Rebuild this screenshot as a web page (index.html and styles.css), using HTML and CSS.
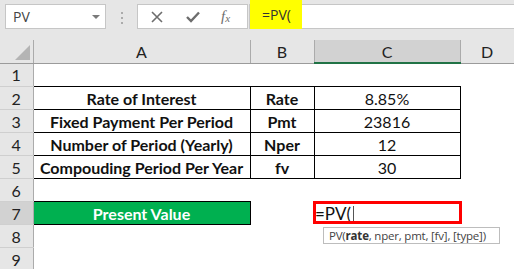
FILE: index.html
```html
<!DOCTYPE html>
<html lang="en">
<head>
  <meta charset="UTF-8">
  <title>PV formula</title>
  <link rel="stylesheet" href="styles.css">
</head>
<body>

  <div class="toolbar">
    <div class="namebox">
      <span>PV</span>
      <span class="drop"></span>
    </div>
    <div class="grip"><i></i><i></i><i></i></div>
    <div class="buttons">
      <svg class="ico" width="12" height="12" viewBox="0 0 12 12">
        <path d="M1 1 L11 11 M11 1 L1 11" stroke="#6d6d6d" stroke-width="1.6" fill="none"/>
      </svg>
      <svg class="ico" width="14" height="12" viewBox="0 0 14 12">
        <path d="M1 6 L5 10 L13 1.5" stroke="#6d6d6d" stroke-width="2.4" fill="none"/>
      </svg>
      <span class="fx">f<sub>x</sub></span>
    </div>
    <div class="fbar">
      <span class="hl">=PV(</span>
    </div>
  </div>

  <table class="sheet">
    <colgroup>
      <col class="c-hd"><col class="c-a"><col class="c-b"><col class="c-c"><col class="c-d">
    </colgroup>
    <tr class="cols">
      <th class="corner"><span class="tri"></span></th>
      <th>A</th>
      <th>B</th>
      <th class="sel">C</th>
      <th>D</th>
    </tr>
    <tr><th>1</th><td></td><td></td><td></td><td></td></tr>
    <tr><th>2</th><td class="bx lbl">Rate of Interest</td><td class="bx lbl">Rate</td><td class="bx">8.85%</td><td></td></tr>
    <tr><th>3</th><td class="bx lbl">Fixed Payment Per Period</td><td class="bx lbl">Pmt</td><td class="bx">23816</td><td></td></tr>
    <tr><th>4</th><td class="bx lbl">Number of Period (Yearly)</td><td class="bx lbl">Nper</td><td class="bx">12</td><td></td></tr>
    <tr><th>5</th><td class="bx lbl">Compouding Period Per Year</td><td class="bx lbl">fv</td><td class="bx">30</td><td></td></tr>
    <tr><th>6</th><td></td><td></td><td></td><td></td></tr>
    <tr><th class="sel">7</th><td class="bx lbl pv">Present Value</td><td></td><td class="edit">=PV(<span class="cursor"></span></td><td></td></tr>
    <tr><th>8</th><td></td><td></td><td></td><td></td></tr>
    <tr><th>9</th><td></td><td></td><td></td><td></td></tr>
  </table>

  <div class="redbox"></div>
  <div class="tip">PV(<b>rate</b>, nper, pmt, [fv], [type])</div>

</body>
</html>
```

FILE: styles.css
```css
body {
  margin: 0;
  width: 514px;
  height: 269px;
  overflow: hidden;
  position: relative;
  background: #fff;
  font-family: "Lato", sans-serif;
}
.toolbar {
  display: flex;
  align-items: flex-start;
  height: 40px;
  box-sizing: border-box;
  padding: 4px 0 0 5px;
  background: #e6e6e6;
}
.namebox {
  width: 101px;
  height: 25px;
  box-sizing: border-box;
  border: 1px solid #c6c6c6;
  background: #fff;
  display: flex;
  align-items: center;
  justify-content: space-between;
  padding: 0 5px 0 7px;
  font-family: "Open Sans", sans-serif;
  font-size: 14px;
  color: #444;
}
.drop {
  border-left: 4px solid transparent;
  border-right: 4px solid transparent;
  border-top: 4px solid #7a7a7a;
}
.grip {
  display: flex;
  flex-direction: column;
  gap: 3px;
  margin: 8px 14px 0 15px;
}
.grip i {
  display: block;
  width: 2px;
  height: 2px;
  background: #ababab;
}
.buttons {
  width: 111px;
  height: 25px;
  box-sizing: border-box;
  border: 1px solid #c6c6c6;
  background: #fff;
  display: flex;
  align-items: center;
  padding-left: 13px;
  gap: 23px;
}
.fx {
  font-family: "Liberation Serif", serif;
  font-style: italic;
  font-size: 15px;
  color: #6d6d6d;
  margin-left: -2px;
}
.fx sub {
  font-size: 11px;
  vertical-align: -1px;
}
.fbar {
  flex: 1;
  height: 25px;
  box-sizing: border-box;
  margin-left: 1px;
  border: 1px solid #c6c6c6;
  border-right: none;
  background: #fff;
  display: flex;
}
.hl {
  margin-top: -5px;
  height: 29px;
  width: 52px;
  box-sizing: border-box;
  padding-left: 12px;
  line-height: 29px;
  background: #ffff00;
  font-family: "Open Sans", sans-serif;
  font-size: 14px;
  color: #333;
}

.sheet {
  border-collapse: collapse;
  table-layout: fixed;
  width: 514px;
}
.c-hd { width: 33px; }
.c-a { width: 217px; }
.c-b { width: 64px; }
.c-c { width: 146px; }
.c-d { width: 54px; }
.sheet th,
.sheet td {
  padding: 0;
  height: 22px;
  font-size: 16px;
  text-align: center;
  white-space: nowrap;
  overflow: hidden;
}
.sheet th {
  background: #e6e6e6;
  color: #222;
  font-weight: normal;
  border-right: 1px solid #ababab;
  border-bottom: 1px solid #cfcfcf;
}
.cols th {
  border-bottom: 1px solid #9b9b9b;
}
.sheet th.sel {
  background: #d2d2d2;
}
.cols th.sel {
  border-bottom: 2px solid #217346;
}
.corner {
  position: relative;
}
.tri {
  position: absolute;
  right: 3px;
  bottom: 3px;
  border-left: 15px solid transparent;
  border-bottom: 15px solid #b4b4b4;
}
.sheet td {
  color: #111;
}
.bx {
  border: 1px solid #000;
}
.lbl {
  font-weight: bold;
}
.pv {
  background: #00b050;
  color: #fff !important;
}
.edit {
  text-align: left !important;
  font-size: 17px !important;
  padding-left: 1px !important;
}
.cursor {
  display: inline-block;
  width: 1px;
  height: 18px;
  margin-left: 2px;
  vertical-align: -4px;
  background: #555;
}
.redbox {
  position: absolute;
  left: 313px;
  top: 201px;
  width: 149px;
  height: 23px;
  box-sizing: border-box;
  border: 3px solid #ff0000;
}
.tip {
  position: absolute;
  left: 323px;
  top: 227px;
  width: 177px;
  height: 17px;
  box-sizing: border-box;
  border: 1px solid #bdbdbd;
  background: #fff;
  padding-left: 5px;
  white-space: nowrap;
  font-family: "Open Sans", sans-serif;
  font-size: 11.5px;
  letter-spacing: -0.2px;
  line-height: 15px;
  color: #444;
}
.tip b {
  color: #333;
}
```
